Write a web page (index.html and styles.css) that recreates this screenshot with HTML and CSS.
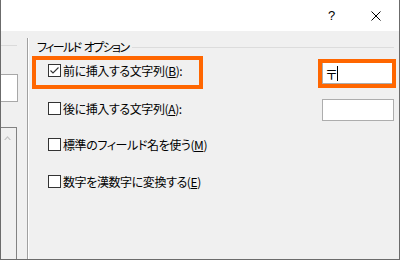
FILE: index.html
```html
<!DOCTYPE html>
<html lang="ja">
<head>
    <meta charset="UTF-8">
    <title>フィールド オプション</title>
    <link rel="stylesheet" href="styles.css">
</head>
<body>
    <div class="window">
        <div class="titlebar">
            <span class="tb-btn help">?</span>
            <span class="tb-btn">
                <svg width="10" height="10" viewBox="0 0 10 10"><path d="M0.5 0.5 L9.5 9.5 M9.5 0.5 L0.5 9.5" stroke="#000" stroke-width="1" fill="none"/></svg>
            </span>
        </div>
        <div class="content">
            <div class="side">
                <div class="side-rule"></div>
                <div class="side-box"></div>
                <div class="side-list">
                    <svg class="arrow" width="7" height="5" viewBox="0 0 7 5"><path d="M0 5 L3.5 1 L7 5 L5.5 5 L3.5 2.8 L1.5 5 Z" fill="#c4c4c4"/></svg>
                </div>
            </div>
            <div class="options">
                <div class="legend"><span>フィールド オプション</span></div>
                <div class="rows">
                    <div class="row">
                        <label class="check marked"><span class="box"><svg width="11" height="11" viewBox="0 0 11 11"><path d="M1.5 5.5 L4 8 L9.5 2.5" stroke="#333" stroke-width="1.1" fill="none"/></svg></span>前に挿入する文字列(<u>B</u>):</label>
                        <div class="field marked">〒<span class="caret"></span></div>
                    </div>
                    <div class="row second">
                        <label class="check"><span class="box"></span>後に挿入する文字列(<u>A</u>):</label>
                        <div class="field"></div>
                    </div>
                    <div class="row">
                        <label class="check"><span class="box"></span>標準のフィールド名を使う(<u>M</u>)</label>
                    </div>
                    <div class="row">
                        <label class="check"><span class="box"></span>数字を漢数字に変換する(<u>E</u>)</label>
                    </div>
                </div>
            </div>
        </div>
    </div>
</body>
</html>
```

FILE: styles.css
```css
body {
    margin: 0;
    font-family: "Noto Sans CJK JP", "Noto Sans", sans-serif;
    font-size: 12px;
    color: #000;
}
.window {
    width: 400px;
    height: 260px;
    box-sizing: border-box;
    border: 1px solid #6b6b6b;
    border-top: none;
    display: flex;
    flex-direction: column;
    overflow: hidden;
}
.titlebar {
    height: 31px;
    flex: none;
    background: #fff;
    display: flex;
    justify-content: flex-end;
}
.tb-btn {
    width: 46px;
    display: flex;
    align-items: center;
    justify-content: center;
}
.help {
    font-family: "Liberation Sans", sans-serif;
    font-size: 13px;
    padding-left: 3px;
    box-sizing: border-box;
}
.content {
    flex: 1;
    background: #f0f0f0;
    display: flex;
}
.side {
    width: 26px;
    margin-top: 7px;
    border-right: 1px solid #a0a0a0;
    box-shadow: 1px 0 0 #fff;
    display: flex;
    flex-direction: column;
}
.side-rule {
    width: 16px;
    height: 1px;
    margin-top: 7px;
    background: #dadada;
}
.side-box {
    width: 16px;
    height: 26px;
    margin-top: 28px;
    background: #fff;
    border: 1px solid #a8a8a8;
    border-left: none;
}
.side-list {
    width: 16px;
    flex: 1;
    margin-top: 25px;
    border: 1px solid #828282;
    border-left: none;
    border-bottom: none;
    padding: 7px 0 0 3px;
    box-sizing: border-box;
}
.arrow {
    display: block;
}
.options {
    flex: 1;
    padding: 9px 5px 0 7px;
    margin-left: 2px;
}
.legend {
    display: flex;
    align-items: center;
    height: 14px;
    line-height: 14px;
    font-feature-settings: "palt";
    letter-spacing: -1.6px;
    word-spacing: 2px;
}
.legend::after {
    content: "";
    flex: 1;
    height: 1px;
    margin-left: 4px;
    background: #dcdcdc;
}
.rows {
    margin: 4px 0 0 11px;
    display: flex;
    flex-direction: column;
    gap: 12px;
}
.row {
    height: 25px;
    display: flex;
    justify-content: space-between;
    align-items: center;
}
.row.second {
    margin-top: 1px;
    margin-bottom: -1px;
}
.check {
    position: relative;
    height: 25px;
    display: flex;
    align-items: center;
    font-feature-settings: "palt";
    letter-spacing: -0.4px;
}
.box {
    width: 13px;
    height: 13px;
    box-sizing: border-box;
    border: 1px solid #333;
    background: #fff;
    margin-right: 2px;
    display: flex;
    align-items: center;
    justify-content: center;
    flex: none;
}
.box svg {
    display: block;
}
.field {
    position: relative;
    width: 72px;
    height: 22px;
    margin-top: 5px;
    box-sizing: border-box;
    border: 1px solid #adadad;
    background: #fff;
    padding-left: 2px;
    display: flex;
    align-items: center;
    font-size: 13px;
}
.second .field {
    margin-top: 3px;
}
.caret {
    width: 1px;
    height: 15px;
    margin-left: -1px;
    background: #000;
}
.check.marked::after {
    content: "";
    position: absolute;
    left: -16px;
    top: -2px;
    bottom: -6px;
    width: 171px;
    box-sizing: border-box;
    border: 4px solid #ff6600;
}
.field.marked::after {
    content: "";
    position: absolute;
    left: -5px;
    top: -4px;
    right: -3px;
    bottom: -5px;
    border: 4px solid #ff6600;
}
```
